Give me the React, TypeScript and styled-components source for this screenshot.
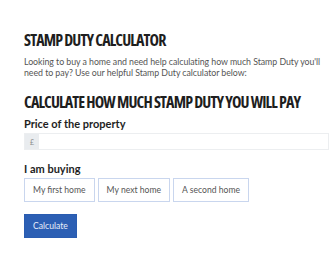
import React from "react";
import styled, { createGlobalStyle } from "styled-components";

const GlobalStyle = createGlobalStyle`
  html, body {
    margin: 0;
    padding: 0;
    background: #ffffff;
  }
  body {
    font-family: Lato, "Noto Sans", sans-serif;
    color: #222222;
  }
`;

const Page = styled.div`
  padding: 30px 7px 20px 24px;
`;

const Title = styled.h1`
  margin: 0;
  font-family: "Open Sans", sans-serif;
  font-stretch: condensed;
  font-weight: 700;
  font-size: 16px;
  line-height: 20px;
  letter-spacing: -0.85px;
  white-space: nowrap;
  color: #1e1e1e;
`;

const Intro = styled.p`
  margin: 6px 0 0;
  font-size: 8.8px;
  line-height: 11px;
  letter-spacing: -0.05px;
  white-space: nowrap;
  color: #555555;
`;

const Subtitle = styled(Title).attrs({ as: "h2" })`
  margin-top: 14px;
`;

const Label = styled.div<{ $gap: number }>`
  margin-top: ${(p) => p.$gap}px;
  font-size: 11px;
  font-weight: 700;
  line-height: 14px;
  color: #1e1e1e;
`;

const InputGroup = styled.div`
  margin-top: 2px;
  display: flex;
  height: 15px;
  border: 1px solid #eceef0;
`;

const Prefix = styled.span`
  width: 14px;
  display: flex;
  align-items: center;
  justify-content: center;
  background: #e9ecef;
  font-size: 7px;
  color: #8a8a8a;
`;

const Field = styled.input`
  flex: 1;
  min-width: 0;
  border: none;
  outline: none;
  padding: 0 6px;
  background: #ffffff;
`;

const Options = styled.div`
  margin-top: 2px;
  display: flex;
  gap: 3px;
`;

const Option = styled.button`
  box-sizing: border-box;
  height: 24px;
  padding: 0 8px;
  border: 1px solid #c9d6ee;
  background: #ffffff;
  font-family: Lato, "Noto Sans", sans-serif;
  font-size: 8.6px;
  color: #555555;
`;

const Submit = styled.button`
  box-sizing: border-box;
  margin-top: 12px;
  height: 24px;
  padding: 0 8px;
  border: 1px solid #2a5cb0;
  background: #2c5fb4;
  font-family: Lato, "Noto Sans", sans-serif;
  font-size: 8.6px;
  color: #e8eefa;
`;

const App: React.FC = () => {
  return (
    <>
      <GlobalStyle />
      <Page>
        <Title>STAMP DUTY CALCULATOR</Title>
        <Intro>
          Looking to buy a home and need help calculating how much Stamp Duty you'll
          <br />
          need to pay? Use our helpful Stamp Duty calculator below:
        </Intro>
        <Subtitle>CALCULATE HOW MUCH STAMP DUTY YOU WILL PAY</Subtitle>
        <Label $gap={5}>Price of the property</Label>
        <InputGroup>
          <Prefix>£</Prefix>
          <Field type="text" />
        </InputGroup>
        <Label $gap={12}>I am buying</Label>
        <Options>
          <Option>My first home</Option>
          <Option>My next home</Option>
          <Option>A second home</Option>
        </Options>
        <Submit>Calculate</Submit>
      </Page>
    </>
  );
};

export default App;
